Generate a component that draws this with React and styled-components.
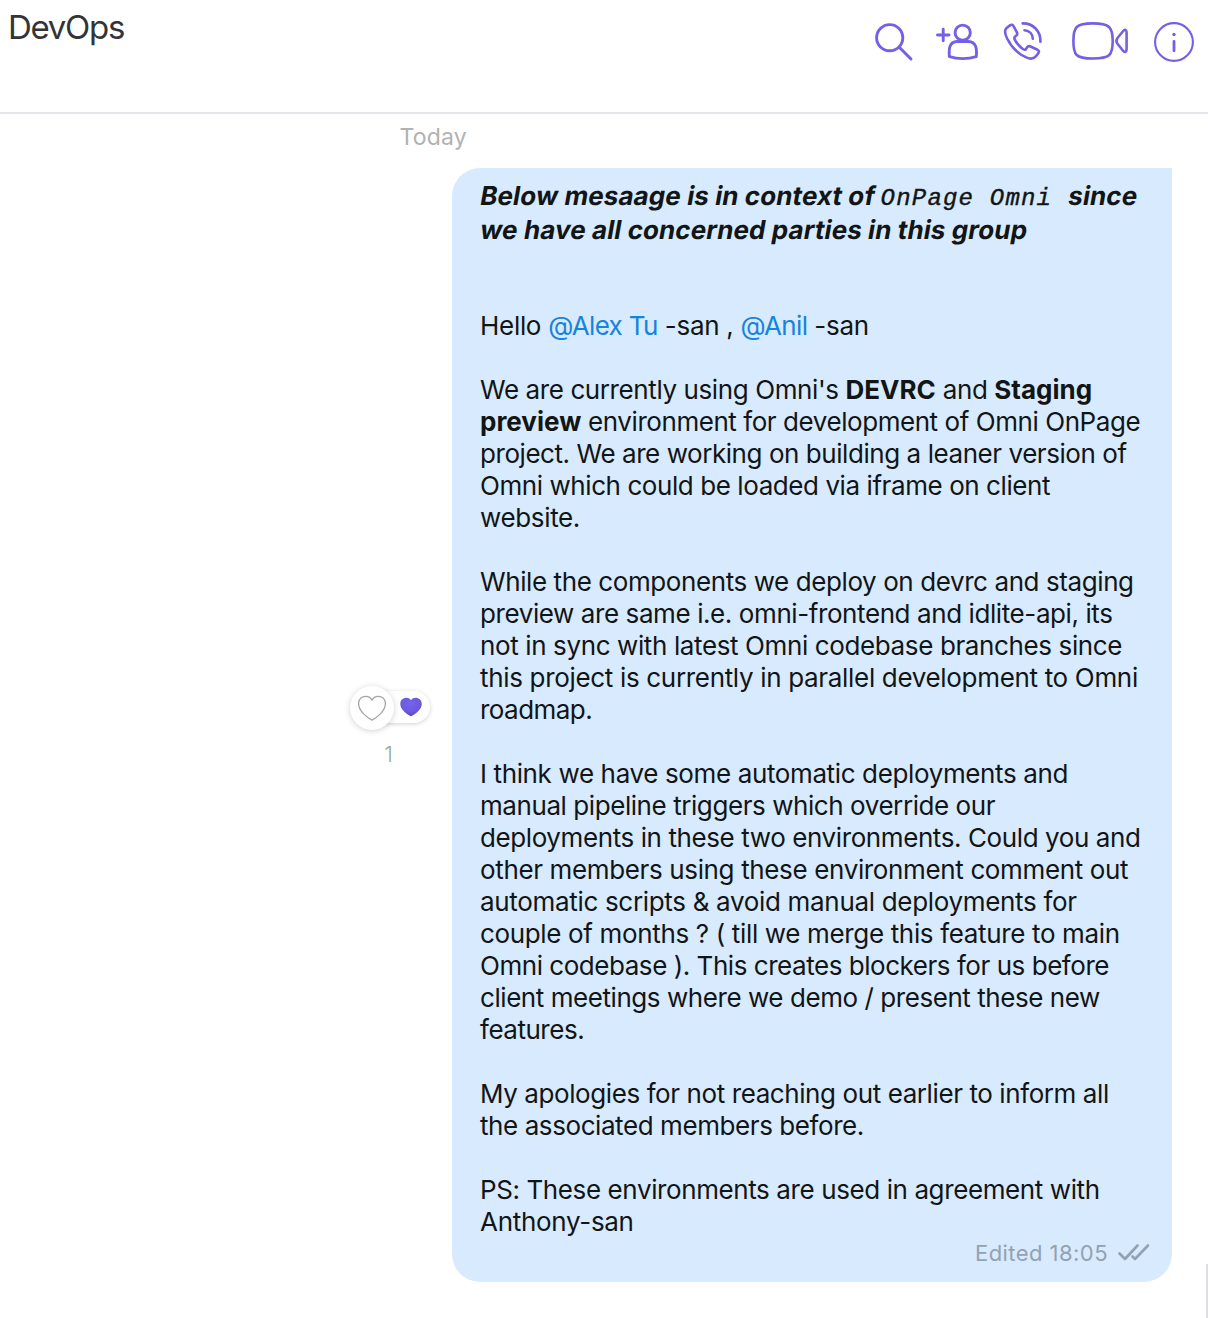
import React from "react";
import styled, { createGlobalStyle } from "styled-components";

const GlobalStyle = createGlobalStyle`
  * { box-sizing: border-box; }
  body {
    margin: 0;
    background: #ffffff;
    font-family: Inter, "Liberation Sans", sans-serif;
  }
`;

const Page = styled.div`
  width: 1208px;
  height: 1318px;
  overflow: hidden;
  display: flex;
  flex-direction: column;
  background: #ffffff;
`;

const Header = styled.header`
  height: 114px;
  flex: none;
  display: flex;
  justify-content: space-between;
  align-items: flex-start;
  padding: 8px 14px 0 8px;
  border-bottom: 2px solid #e5e5ed;
`;

const Title = styled.h1`
  margin: 0;
  font-size: 33px;
  line-height: 38px;
  font-weight: 400;
  letter-spacing: -1.3px;
  color: #333437;
`;

const Actions = styled.nav`
  display: flex;
  align-items: center;
  height: 68px;
`;

const IconButton = styled.button`
  display: flex;
  padding: 0;
  border: 0;
  background: none;
  color: #7360e4;
  margin-left: ${(p) => p.$gap || 0}px;
`;

const Glyph = styled.svg`
  display: block;
  fill: none;
  stroke: currentColor;
  stroke-width: ${(p) => p.$weight || 2.9};
  stroke-linecap: round;
  stroke-linejoin: round;
`;

const Conversation = styled.main`
  flex: 1;
  min-height: 0;
  display: flex;
  flex-direction: column;
`;

const DayLabel = styled.div`
  height: 54px;
  padding: 9px 0 0 399.5px;
  font-size: 23px;
  line-height: 28px;
  letter-spacing: 0.2px;
  color: #b1b1b3;
`;

const MessageRow = styled.section`
  display: flex;
  align-items: flex-start;
  height: 1150px;
`;

const Reactions = styled.aside`
  width: 452px;
  flex: none;
  padding: 518px 0 0 350px;
`;

const ReactionPill = styled.div`
  display: flex;
  align-items: center;
`;

const LikeButton = styled.button`
  width: 44px;
  height: 44px;
  padding: 0;
  border: 0;
  border-radius: 50%;
  display: flex;
  align-items: center;
  justify-content: center;
  background: #ffffff;
  box-shadow: 0 1px 6px rgba(0, 0, 0, 0.18);
  color: #a5a5a5;
  z-index: 1;
`;

const ReactionSummary = styled.div`
  width: 60px;
  height: 32px;
  margin: 0 0 2px -24px;
  padding-right: 8px;
  display: flex;
  align-items: center;
  justify-content: flex-end;
  border-radius: 16px;
  background: #ffffff;
  box-shadow: 0 1px 4px rgba(0, 0, 0, 0.18);
`;

const ReactionCount = styled.div`
  width: 77px;
  padding-top: 10px;
  text-align: center;
  font-size: 22px;
  line-height: 28px;
  font-weight: 300;
  color: #8fb096;
`;

const Bubble = styled.article`
  width: 720px;
  height: 1114px;
  flex: none;
  padding: 11px 22px 0 28px;
  border-radius: 28px 0 28px 28px;
  background: #d8eafe;
  color: #121516;
`;

const Headline = styled.div`
  height: 131px;
  font-size: 26px;
  line-height: 34px;
  font-weight: 700;
`;

const HeadlineRow = styled.div`
  display: flex;
  align-items: baseline;
  height: 34px;
  margin-left: -1px;
`;

const Slanted = styled.span`
  white-space: pre;
  transform: skewX(-10deg);
  transform-origin: 0 26px;
  letter-spacing: 0.09px;
`;

const Paragraph = styled.p`
  margin: 0 0 ${(p) => (p.$last ? 0 : 32)}px;
  font-size: 26px;
  line-height: 32px;
`;

const Line = styled.span`
  display: block;
  width: max-content;
  white-space: pre;
  letter-spacing: ${(p) => p.$track || 0}px;
`;

const Strong = styled.strong`
  font-weight: 700;
  letter-spacing: 0;
`;

const Code = styled.code`
  margin-left: 7px;
  width: 186.5px;
  white-space: pre;
  font-family: "Liberation Mono", monospace;
  font-size: 24px;
  line-height: 34px;
  font-style: italic;
  font-weight: 400;
  letter-spacing: 1.2px;
  -webkit-text-stroke: 0.4px currentColor;
`;

const Mention = styled.span`
  letter-spacing: -0.65px;
  color: #1683df;
`;

const MessageMeta = styled.footer`
  display: flex;
  align-items: center;
  justify-content: flex-end;
  gap: 10px;
  height: 30px;
  font-size: 22px;
  letter-spacing: 0.45px;
  color: #92a2b4;
`;

const ScrollEdge = styled.div`
  width: 2px;
  height: 54px;
  margin: 1096px 0 0 34px;
  background: #dedee2;
`;

export default function App() {
  return (
    <Page>
      <GlobalStyle />
      <Header>
        <Title>DevOps</Title>
        <Actions>
          <IconButton aria-label="Search">
            <Glyph width="40" height="40" viewBox="874 22 40 40">
              <circle cx="889.7" cy="37.7" r="13.1" />
              <path d="M899.5 47.5L911 59" />
            </Glyph>
          </IconButton>
          <IconButton aria-label="Add participant" $gap={20}>
            <Glyph width="46" height="40" viewBox="934 22 46 40">
              <path d="M937.5 35H949M943.2 29.2V40.8" />
              <circle cx="962.7" cy="32.7" r="7.6" />
              <path d="M949.4 56.7C948.6 48 949.5 42 957 41.5H968.5C976 42 977.1 48 976.3 56.7C968 59.1 957.5 59.1 949.4 56.7Z" />
            </Glyph>
          </IconButton>
          <IconButton aria-label="Call" $gap={22}>
            <Glyph width="42" height="40" viewBox="1002 22 42 40" $weight={2.6}>
              <path d="M1010 25.4L1006.6 28C1003.9 30.3 1005.2 34.8 1007.4 39C1012 48 1019 54.8 1028 58.1C1031.4 59.3 1034 58.6 1036 56.2L1038.4 53.1C1039.4 51.6 1039 50.6 1037.5 49.8L1030.5 46.5C1029 45.8 1028.1 46 1027.2 47.3L1025.8 49.3C1024.8 50.4 1023.6 49.7 1021.9 48.3C1018.7 45.7 1016.2 42.7 1014.6 39.1C1014 37.7 1014.2 37.1 1015.4 36.3L1016.6 35.3C1017.5 34.5 1017.4 33.5 1016.9 32.4L1013.7 26.4C1012.8 24.6 1011.4 24.4 1010 25.4Z" />
              <path d="M1022.7 23.4C1033 23.2 1040.8 31 1040.4 41.8M1024.5 30.2C1029.5 30.6 1032.7 34 1032.8 38.8" />
            </Glyph>
          </IconButton>
          <IconButton aria-label="Video call" $gap={26}>
            <Glyph width="60" height="40" viewBox="1070 22 60 40" $weight={2.6}>
              <path d="M1073.4 41C1073.4 27 1076 23.4 1092.8 23.4S1112.7 27 1112.7 41S1110 58.5 1092.8 58.5S1073.4 55 1073.4 41Z" />
              <path d="M1117.5 38L1123 31.2C1124.7 29 1126.6 29.8 1126.6 32.4V49.2C1126.6 52 1124.7 52.8 1123 50.7L1117.5 43.8C1116 41.8 1116 40 1117.5 38Z" />
            </Glyph>
          </IconButton>
          <IconButton aria-label="Information" $gap={24}>
            <Glyph width="40" height="40" viewBox="1154 22 40 40" $weight={2.1}>
              <circle cx="1174" cy="42" r="18.9" />
              <path d="M1174 41.5V50.8" strokeWidth="2.8" />
              <circle cx="1174" cy="34.5" r="1.7" fill="currentColor" stroke="none" />
            </Glyph>
          </IconButton>
        </Actions>
      </Header>
      <Conversation>
        <DayLabel>Today</DayLabel>
        <MessageRow>
          <Reactions>
            <ReactionPill>
              <LikeButton aria-label="Like">
                <Glyph width="30" height="28" viewBox="0 0 30 28" $weight={1.3}>
                  <path d="M15 26.1C10.5 23.7 1.6 17.5 1.6 9.6C1.6 2.2 11.3-.4 15 6.2C18.7-.4 28.4 2.2 28.4 9.6C28.4 17.5 19.5 23.7 15 26.1Z" />
                </Glyph>
              </LikeButton>
              <ReactionSummary>
                <svg width="22" height="20" viewBox="0 0 22 20">
                  <defs>
                    <radialGradient id="heart" cx=".45" cy=".3" r=".7">
                      <stop offset="0" stopColor="#7563ea" />
                      <stop offset=".65" stopColor="#6c59e0" />
                      <stop offset="1" stopColor="#5542bc" />
                    </radialGradient>
                  </defs>
                  <path fill="url(#heart)" d="M11 19.3C7.5 17.5.3 13 .3 7C.3 .6 8-1.2 11 3.2C14-1.2 21.7.6 21.7 7C21.7 13 14.5 17.5 11 19.3Z" />
                </svg>
              </ReactionSummary>
            </ReactionPill>
            <ReactionCount>1</ReactionCount>
          </Reactions>
          <Bubble>
            <Headline>
              <HeadlineRow>
                <Slanted>Below mesaage is in context of</Slanted>
                <Code>OnPage Omni </Code>
                <Slanted>since</Slanted>
              </HeadlineRow>
              <HeadlineRow>
                <Slanted>we have all concerned parties in this group</Slanted>
              </HeadlineRow>
            </Headline>
            <Paragraph>
              <Line $track={-0.3}>Hello <Mention>@Alex Tu</Mention> -san , <Mention>@Anil</Mention> -san</Line>
            </Paragraph>
            <Paragraph>
              <Line $track={-0.4}>We are currently using Omni's <Strong>DEVRC</Strong> and <Strong>Staging</Strong></Line>
              <Line $track={-0.44}><Strong>preview</Strong> environment for development of Omni OnPage</Line>
              <Line $track={-0.44}>project. We are working on building a leaner version of</Line>
              <Line $track={-0.425}>Omni which could be loaded via iframe on client</Line>
              <Line $track={-0.35}>website.</Line>
            </Paragraph>
            <Paragraph>
              <Line $track={-0.41}>While the components we deploy on devrc and staging</Line>
              <Line $track={-0.41}>preview are same i.e. omni-frontend and idlite-api, its</Line>
              <Line $track={-0.38}>not in sync with latest Omni codebase branches since</Line>
              <Line $track={-0.325}>this project is currently in parallel development to Omni</Line>
              <Line $track={-0.55}>roadmap.</Line>
            </Paragraph>
            <Paragraph>
              <Line $track={-0.37}>I think we have some automatic deployments and</Line>
              <Line $track={-0.43}>manual pipeline triggers which override our</Line>
              <Line $track={-0.405}>deployments in these two environments. Could you and</Line>
              <Line $track={-0.36}>other members using these environment comment out</Line>
              <Line $track={-0.32}>automatic scripts &amp; avoid manual deployments for</Line>
              <Line $track={-0.345}>couple of months ? ( till we merge this feature to main</Line>
              <Line $track={-0.46}>Omni codebase ). This creates blockers for us before</Line>
              <Line $track={-0.44}>client meetings where we demo / present these new</Line>
              <Line $track={-0.48}>features.</Line>
            </Paragraph>
            <Paragraph>
              <Line $track={-0.41}>My apologies for not reaching out earlier to inform all</Line>
              <Line $track={-0.42}>the associated members before.</Line>
            </Paragraph>
            <Paragraph $last>
              <Line $track={-0.4}>PS: These environments are used in agreement with</Line>
              <Line $track={-0.3}>Anthony-san</Line>
            </Paragraph>
            <MessageMeta>
              <span>Edited 18:05</span>
              <Glyph width="32" height="18" viewBox="0 0 32 18" $weight={2.6}>
                <path d="M1.5 9.5L7 15L19.5 1.5M14.5 12.5L17 15L30 1.5" />
              </Glyph>
            </MessageMeta>
          </Bubble>
          <ScrollEdge />
        </MessageRow>
      </Conversation>
    </Page>
  );
}
